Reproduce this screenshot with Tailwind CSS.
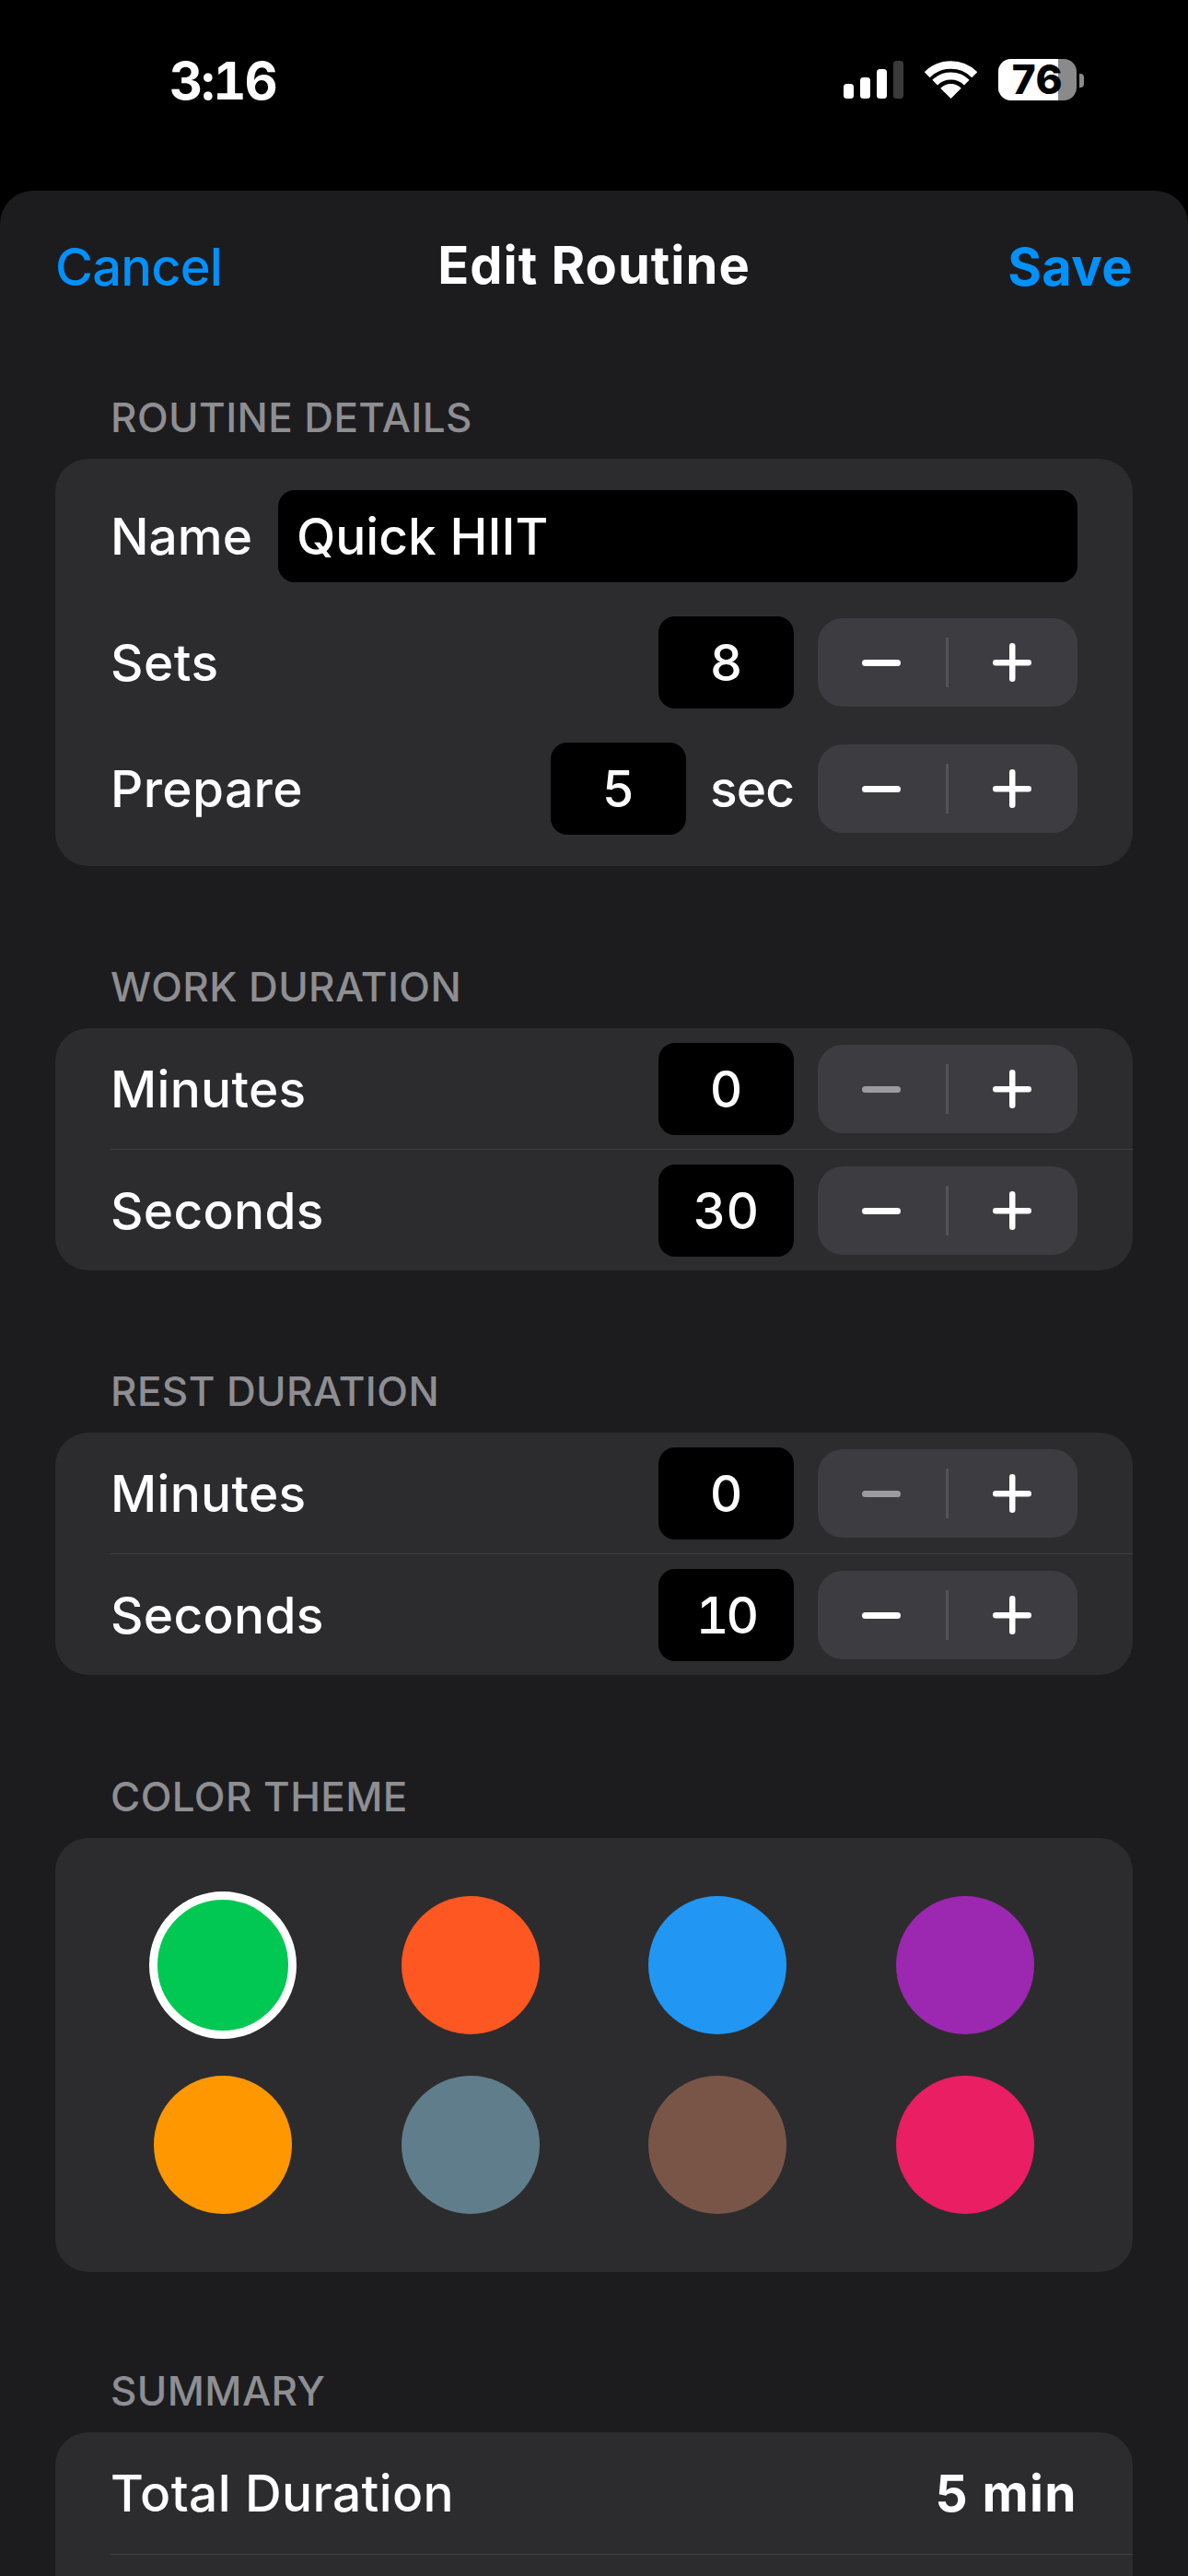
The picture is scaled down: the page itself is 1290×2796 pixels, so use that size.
<!DOCTYPE html>
<html lang="en">
<head>
<meta charset="utf-8">
<title>Edit Routine</title>
<script src="https://cdn.jsdelivr.net/npm/@tailwindcss/browser@4"></script>
</head>
<body class="m-0 bg-black font-['Inter','Liberation_Sans',sans-serif] text-white overflow-hidden">
<div class="w-[1290px] h-[2796px] overflow-hidden flex flex-col">

  <!-- status bar -->
  <div class="h-[207px] shrink-0 relative flex items-start justify-between pl-[184px] pr-[113px] pt-[60px]">
    <div class="text-[56px] leading-[56px] font-bold tabular-nums tracking-[-2px]">3:16</div>
    <div class="flex items-start gap-0 mt-[4px]">
      <svg class="mt-[2px]" width="65" height="41" viewBox="0 0 65 41"><rect x="0" y="25" width="11" height="16" rx="3.5" fill="#fff"/><rect x="18" y="18" width="11" height="23" rx="3.5" fill="#fff"/><rect x="36" y="9" width="11" height="32" rx="3.5" fill="#fff"/><rect x="54" y="0" width="11" height="41" rx="3.5" fill="#3a3a3a"/></svg>
      <svg class="ml-[23px] mt-[2px]" width="57" height="41" viewBox="0 0 57 41"><path d="M2.7 15.2A36.5 36.5 0 0 1 54.3 15.2" fill="none" stroke="#fff" stroke-width="8.5"/><path d="M11.2 23.7A24.5 24.5 0 0 1 45.8 23.7" fill="none" stroke="#fff" stroke-width="8"/><path d="M28.5 41L17.2 29.7A16 16 0 0 1 39.8 29.7Z" fill="#fff"/></svg>
      <div class="relative ml-[23px] w-[85px] h-[45px] rounded-[14px] bg-[#8a8a8a] flex items-center justify-center">
        <div class="absolute left-0 top-0 bottom-0 w-[65px] rounded-l-[14px] bg-white"></div>
        <span class="relative text-[44px] leading-[45px] font-extrabold text-black tracking-[0.5px]">76</span>
      </div>
      <div class="ml-[3px] mt-[16px] w-[5px] h-[15px] rounded-r-[4px] bg-[#8a8a8a]"></div>
    </div>
  </div>

  <!-- sheet -->
  <div class="flex-1 bg-[#1c1c1e] rounded-t-[36px] px-[60px]">
    <div class="h-[166px] relative flex items-center justify-between text-[#0091ff] text-[56px] font-medium tracking-[-0.8px]">
      <span>Cancel</span>
      <span class="absolute left-0 right-0 text-center text-white font-bold text-[56px] tracking-[1px] -mt-[4px]">Edit Routine</span>
      <span class="font-bold tracking-[0.4px]">Save</span>
    </div>

    <div class="h-[57px]"></div>

    <!-- routine details -->
    <div class="pl-[60px] h-[46px] mb-[22px] text-[#8e8e93] text-[44px] leading-[46px] font-medium tracking-[0.4px]">ROUTINE DETAILS</div>
    <div class="bg-[#2c2c2e] rounded-[36px] pt-[34px] pb-[34px] pl-[60px] pr-[60px] flex flex-col gap-[37px] text-[55px] leading-[60px] font-medium tabular-nums">
      <div class="flex items-center h-[100px]">
        <span class="w-[182px] shrink-0">Name</span>
        <div class="flex-1 h-[100px] bg-black rounded-[18px] pl-[20px] flex items-center">Quick HIIT</div>
      </div>
      <div class="flex items-center h-[100px]">
        <span class="mr-auto tracking-[0.5px]">Sets</span>
        <div class="w-[147px] h-[100px] bg-black rounded-[18px] flex items-center justify-center">8</div>
        <div class="ml-[26px] w-[282px] h-[96px] rounded-[27px] bg-[#3d3d41] flex items-center pr-[2px]">
          <div class="flex-1 flex justify-center"><svg width="42" height="42" viewBox="0 0 42 42"><rect x="0" y="18" width="42" height="7" rx="3.5" fill="#fff"/></svg></div>
          <div class="w-[3px] h-[54px] bg-[#545458]"></div>
          <div class="flex-1 flex justify-center"><svg width="42" height="42" viewBox="0 0 42 42"><rect x="0" y="18" width="42" height="6.5" rx="3.2" fill="#fff"/><rect x="18" y="0" width="6.5" height="42" rx="3.2" fill="#fff"/></svg></div>
        </div>
      </div>
      <div class="flex items-center h-[100px]">
        <span class="mr-auto tracking-[0.4px]">Prepare</span>
        <div class="w-[147px] h-[100px] bg-black rounded-[18px] flex items-center justify-center">5</div>
        <span class="ml-[26px] w-[91px] tracking-[-0.8px]">sec</span>
        <div class="ml-[26px] w-[282px] h-[96px] rounded-[27px] bg-[#3d3d41] flex items-center pr-[2px]">
          <div class="flex-1 flex justify-center"><svg width="42" height="42" viewBox="0 0 42 42"><rect x="0" y="18" width="42" height="7" rx="3.5" fill="#fff"/></svg></div>
          <div class="w-[3px] h-[54px] bg-[#545458]"></div>
          <div class="flex-1 flex justify-center"><svg width="42" height="42" viewBox="0 0 42 42"><rect x="0" y="18" width="42" height="6.5" rx="3.2" fill="#fff"/><rect x="18" y="0" width="6.5" height="42" rx="3.2" fill="#fff"/></svg></div>
        </div>
      </div>
    </div>

    <!-- work duration -->
    <div class="mt-[108px] pl-[60px] h-[46px] mb-[22px] text-[#8e8e93] text-[44px] leading-[46px] font-medium tracking-[0.4px]">WORK DURATION</div>
    <div class="bg-[#2c2c2e] rounded-[36px] pl-[60px] text-[55px] leading-[60px] font-medium tabular-nums">
      <div class="flex items-center pt-[16px] pb-[15px] pr-[60px] border-b border-[#3f3f41] box-content h-[100px]">
        <span class="mr-auto tracking-[0.3px]">Minutes</span>
        <div class="w-[147px] h-[100px] bg-black rounded-[18px] flex items-center justify-center">0</div>
        <div class="ml-[26px] w-[282px] h-[96px] rounded-[27px] bg-[#3d3d41] flex items-center pr-[2px]">
          <div class="flex-1 flex justify-center"><svg width="42" height="42" viewBox="0 0 42 42"><rect x="0" y="18" width="42" height="7" rx="3.5" fill="#9c9ca0"/></svg></div>
          <div class="w-[3px] h-[54px] bg-[#545458]"></div>
          <div class="flex-1 flex justify-center"><svg width="42" height="42" viewBox="0 0 42 42"><rect x="0" y="18" width="42" height="6.5" rx="3.2" fill="#fff"/><rect x="18" y="0" width="6.5" height="42" rx="3.2" fill="#fff"/></svg></div>
        </div>
      </div>
      <div class="flex items-center pt-[16px] pb-[15px] pr-[60px] box-content h-[100px]">
        <span class="mr-auto tracking-[0.3px]">Seconds</span>
        <div class="w-[147px] h-[100px] bg-black rounded-[18px] flex items-center justify-center">30</div>
        <div class="ml-[26px] w-[282px] h-[96px] rounded-[27px] bg-[#3d3d41] flex items-center pr-[2px]">
          <div class="flex-1 flex justify-center"><svg width="42" height="42" viewBox="0 0 42 42"><rect x="0" y="18" width="42" height="7" rx="3.5" fill="#fff"/></svg></div>
          <div class="w-[3px] h-[54px] bg-[#545458]"></div>
          <div class="flex-1 flex justify-center"><svg width="42" height="42" viewBox="0 0 42 42"><rect x="0" y="18" width="42" height="6.5" rx="3.2" fill="#fff"/><rect x="18" y="0" width="6.5" height="42" rx="3.2" fill="#fff"/></svg></div>
        </div>
      </div>
    </div>

    <!-- rest duration -->
    <div class="mt-[108px] pl-[60px] h-[46px] mb-[22px] text-[#8e8e93] text-[44px] leading-[46px] font-medium tracking-[0.4px]">REST DURATION</div>
    <div class="bg-[#2c2c2e] rounded-[36px] pl-[60px] text-[55px] leading-[60px] font-medium tabular-nums">
      <div class="flex items-center pt-[16px] pb-[15px] pr-[60px] border-b border-[#3f3f41] box-content h-[100px]">
        <span class="mr-auto tracking-[0.3px]">Minutes</span>
        <div class="w-[147px] h-[100px] bg-black rounded-[18px] flex items-center justify-center">0</div>
        <div class="ml-[26px] w-[282px] h-[96px] rounded-[27px] bg-[#3d3d41] flex items-center pr-[2px]">
          <div class="flex-1 flex justify-center"><svg width="42" height="42" viewBox="0 0 42 42"><rect x="0" y="18" width="42" height="7" rx="3.5" fill="#9c9ca0"/></svg></div>
          <div class="w-[3px] h-[54px] bg-[#545458]"></div>
          <div class="flex-1 flex justify-center"><svg width="42" height="42" viewBox="0 0 42 42"><rect x="0" y="18" width="42" height="6.5" rx="3.2" fill="#fff"/><rect x="18" y="0" width="6.5" height="42" rx="3.2" fill="#fff"/></svg></div>
        </div>
      </div>
      <div class="flex items-center pt-[16px] pb-[15px] pr-[60px] box-content h-[100px]">
        <span class="mr-auto tracking-[0.3px]">Seconds</span>
        <div class="w-[147px] h-[100px] bg-black rounded-[18px] flex items-center justify-center tracking-[-3px]">10</div>
        <div class="ml-[26px] w-[282px] h-[96px] rounded-[27px] bg-[#3d3d41] flex items-center pr-[2px]">
          <div class="flex-1 flex justify-center"><svg width="42" height="42" viewBox="0 0 42 42"><rect x="0" y="18" width="42" height="7" rx="3.5" fill="#fff"/></svg></div>
          <div class="w-[3px] h-[54px] bg-[#545458]"></div>
          <div class="flex-1 flex justify-center"><svg width="42" height="42" viewBox="0 0 42 42"><rect x="0" y="18" width="42" height="6.5" rx="3.2" fill="#fff"/><rect x="18" y="0" width="6.5" height="42" rx="3.2" fill="#fff"/></svg></div>
        </div>
      </div>
    </div>

    <!-- colour theme -->
    <div class="mt-[109px] pl-[60px] h-[46px] mb-[22px] text-[#8e8e93] text-[44px] leading-[46px] font-medium tracking-[0.4px]">COLOR THEME</div>
    <div class="bg-[#2c2c2e] rounded-[36px] h-[471px] px-[60px] pt-[63px] grid grid-cols-4 gap-x-6 gap-y-[45px] justify-items-center content-start">
      <div class="w-[160px] h-[160px] -m-[5px] rounded-full bg-[#00c853] border-[9px] border-white"></div>
      <div class="w-[150px] h-[150px] rounded-full bg-[#ff5722]"></div>
      <div class="w-[150px] h-[150px] rounded-full bg-[#2196f3]"></div>
      <div class="w-[150px] h-[150px] rounded-full bg-[#9c27b0]"></div>
      <div class="w-[150px] h-[150px] rounded-full bg-[#ff9800]"></div>
      <div class="w-[150px] h-[150px] rounded-full bg-[#607d8b]"></div>
      <div class="w-[150px] h-[150px] rounded-full bg-[#795548]"></div>
      <div class="w-[150px] h-[150px] rounded-full bg-[#e91e63]"></div>
    </div>

    <!-- summary -->
    <div class="mt-[106px] pl-[60px] h-[46px] mb-[22px] text-[#8e8e93] text-[44px] leading-[46px] font-medium tracking-[0.4px]">SUMMARY</div>
    <div class="bg-[#2c2c2e] rounded-[36px] pl-[60px] text-[55px] leading-[60px] font-medium h-[300px]">
      <div class="flex items-center justify-between h-[133px] pr-[60px] border-b border-[#3f3f41]">
        <span class="tracking-[0.4px]">Total Duration</span>
        <span class="font-bold tracking-[1.4px]">5 min</span>
      </div>
    </div>
  </div>
</div>
</body>
</html>
